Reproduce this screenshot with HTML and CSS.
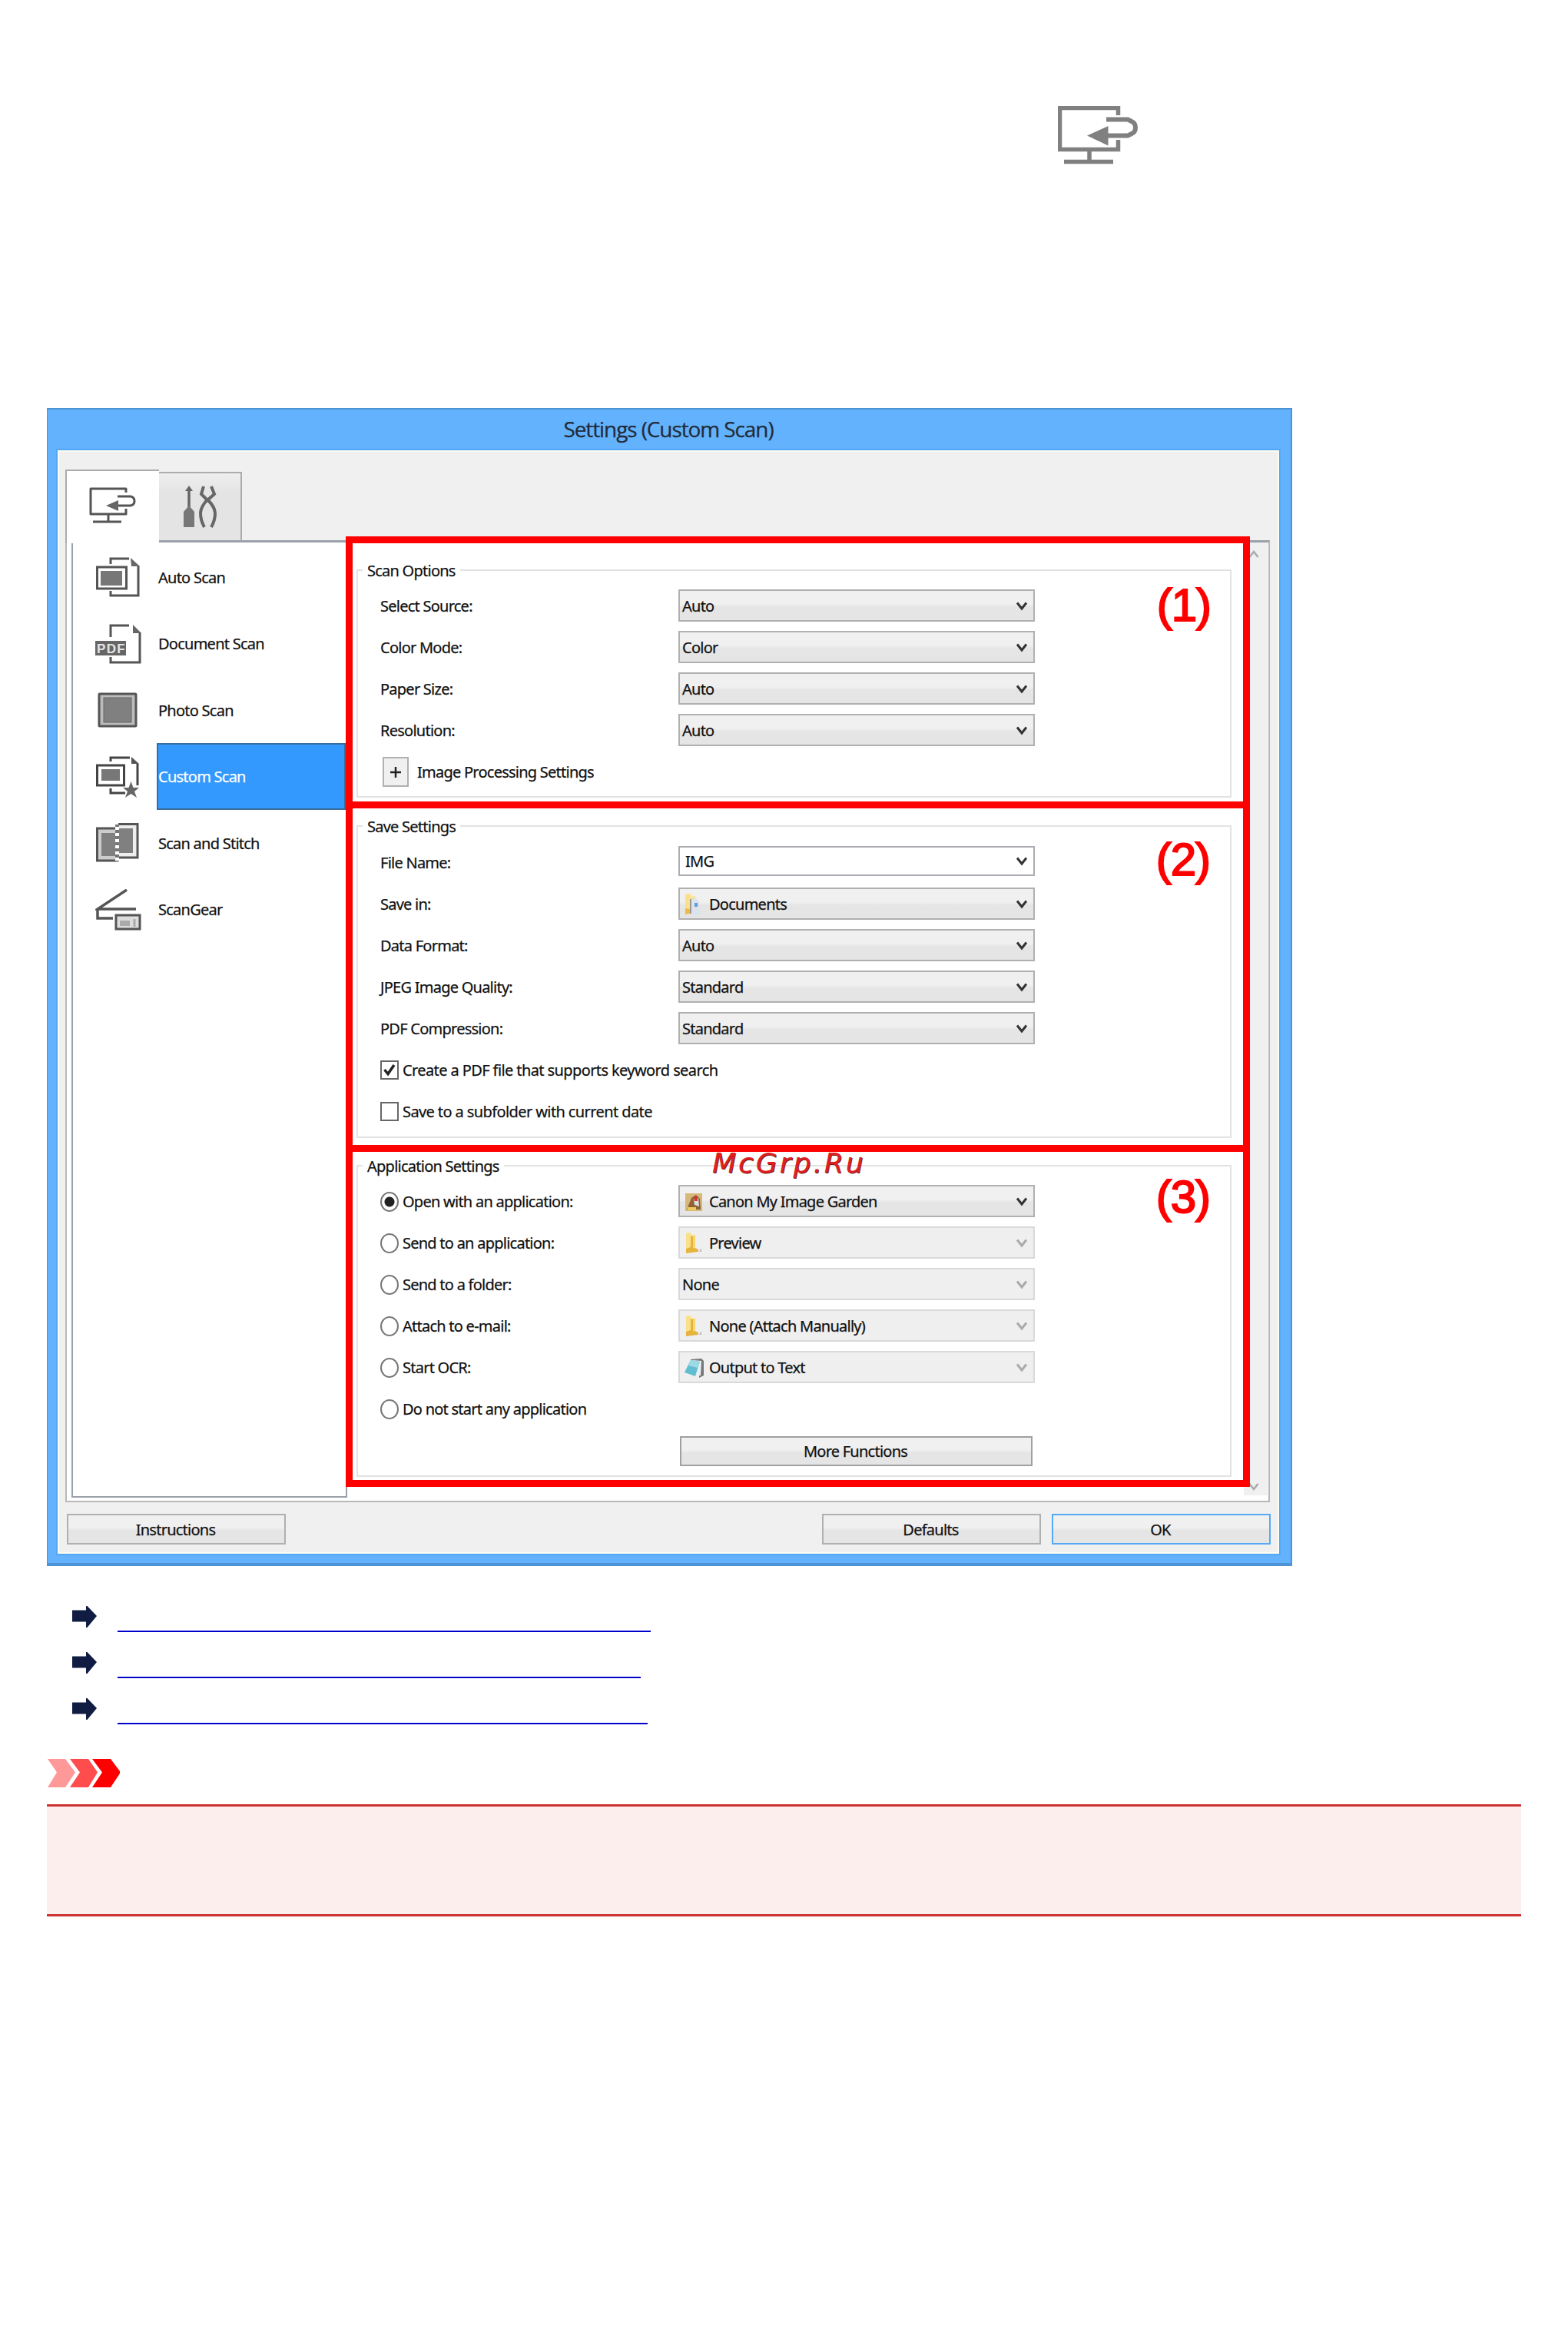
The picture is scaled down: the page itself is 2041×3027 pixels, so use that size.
FILE: index.html
```html
<!DOCTYPE html>
<html lang="en">
<head>
<meta charset="utf-8">
<title>Settings (Custom Scan)</title>
<link rel="stylesheet" href="styles.css">
</head>
<body>
<svg class="defs" width="0" height="0" aria-hidden="true">
  <symbol id="scan-to-pc" viewBox="0 0 104 76">
    <path d="M78.500 12V2.500H2.500V56.500H78.500V44M41 57V70M8 72.500H72" fill="none" stroke="#808080" stroke-width="5.500"/>
    <path d="M63 17.500H91L96 20Q101 22 101 28Q101 34 96 36L91 38.500H60" fill="none" stroke="#808080" stroke-width="6"/>
    <path d="M38 38.500L65.500 26V51.500Z" fill="#808080"/>
  </symbol>
  <symbol id="chevron" viewBox="0 0 16 12"><path d="M2 1.500L8 9L14 1.500" fill="none" stroke="currentColor" stroke-width="3"/></symbol>
  <symbol id="arrow" viewBox="0 0 32 28"><path d="M0 5.500H18V0H19.500L32 13L19.500 28H18V20.500H0Z" fill="#101c42"/></symbol>
  <symbol id="folder" viewBox="0 0 24 30">
    <path d="M2 2L8 1L9 5L14 4V22L10 24L2 27Z" fill="#fbe08a"/><path d="M8 5L11 6V20L18 23V26L2 28V22L8 20Z" fill="#e5b43c"/><path d="M11 6L14 4V20L11 22Z" fill="#f8d768"/><path d="M19 26L22 21V26Z" fill="#b7bcc2"/>
  </symbol>
</svg>

<main class="page">
  <header class="page-head"><svg class="head-icon"><use href="#scan-to-pc"/></svg></header>

  <section class="window">
    <h1 class="titlebar"><span>Settings (Custom Scan)</span></h1>
    <div class="client">
      <nav class="tabs">
        <div class="tab tab-active">
          <svg width="62" height="48" viewBox="0 0 62 48" fill="none" stroke="#555" stroke-width="3">
            <path d="M49 7V2H3V35H49V28M26 35V44M6 45H43" stroke-linejoin="round"/><path d="M38 12H55Q60 13 60 18Q60 23 55 24H38"/><path d="M23 24L39 17V31Z" fill="#666" stroke="none"/>
          </svg>
        </div>
        <div class="tab">
          <svg width="44" height="55" viewBox="0 0 44 55" fill="none" stroke="#666" stroke-width="4">
            <path d="M8 4V32" stroke-width="3.500"/><path d="M3 7L8 0L13 7Z" fill="#666" stroke="none"/><path d="M1 34L8 26L15 34V54H1Z" fill="#777" stroke="none"/>
            <path d="M27 1L24 11L32 19L41 11L37 1M32 18Q23 28 23 36Q23 45 28 54M32 18Q42 28 42 36Q42 45 37 54"/>
          </svg>
        </div>
      </nav>

      <div class="panel">
        <ul class="modes">
          <li class="mode">
            <svg width="60" height="54" viewBox="0 0 60 54" fill="none" stroke="#555" stroke-width="3"><path d="M20 10V3H44M20 45V51H56V12"/><path d="M46 2L58 13H47Z" fill="#666" stroke="none"/><rect x="2.500" y="14" width="38" height="28"/><rect x="7" y="19" width="28" height="19" fill="#777" stroke="none"/></svg>
            <span class="mode-name">Auto Scan</span></li>
          <li class="mode">
            <svg width="60" height="54" viewBox="0 0 60 54" fill="none" stroke="#555" stroke-width="3"><path d="M20 18V3H44M20 44V51H58V12"/><path d="M49 2L60 13H49Z" fill="#666" stroke="none"/><rect x="0" y="23" width="40" height="19" fill="#666" stroke="none"/><text x="2" y="39" class="pdf-tag" textLength="36">PDF</text></svg>
            <span class="mode-name">Document Scan</span></li>
          <li class="mode">
            <svg width="60" height="54" viewBox="0 0 60 54"><rect x="5" y="6" width="48" height="42" rx="1" fill="#bbb" stroke="#555" stroke-width="3"/><rect x="11" y="11" width="36" height="32" fill="#808080" stroke="#666"/></svg>
            <span class="mode-name">Photo Scan</span></li>
          <li class="mode mode-selected">
            <svg width="60" height="54" viewBox="0 0 60 54" fill="none" stroke="#444" stroke-width="3"><path d="M20 7V2H45M55 10V38M20 42V48H39"/><path d="M47 1L57 10H47Z" fill="#555" stroke="none"/><rect x="2.500" y="12" width="35" height="26"/><rect x="8" y="17" width="24" height="15" fill="#777" stroke="none"/><path d="M46.500 33L49.500 41H57L51 46L54 54L46.500 49L39 54L42 46L36 41H43.500Z" fill="#666" stroke="none"/></svg>
            <span class="mode-name">Custom Scan</span></li>
          <li class="mode">
            <svg width="60" height="54" viewBox="0 0 60 54"><path d="M27 8H2.500V50H30" fill="#ccc" stroke="#555" stroke-width="3"/><path d="M8 14H26V44H8Z" fill="#808080"/><path d="M30 2.500H55V46H30" fill="#eee" stroke="#555" stroke-width="3"/><path d="M31 8H49V40H31Z" fill="#808080"/><path d="M28.500 3V51" stroke="#777" stroke-width="5"/><path d="M28.500 6V51" stroke="#fff" stroke-width="5" stroke-dasharray="4 4"/></svg>
            <span class="mode-name">Scan and Stitch</span></li>
          <li class="mode">
            <svg width="60" height="54" viewBox="0 0 60 54" fill="none" stroke="#555" stroke-width="3"><path d="M41 1L3 26H53M3 26V38H23" stroke-width="3.500"/><rect x="27" y="34" width="31" height="18" fill="#ddd"/><path d="M32 41H45V48H32Z" fill="#aaa" stroke="none"/><path d="M51 39V49" stroke="#aaa"/></svg>
            <span class="mode-name">ScanGear</span></li>
        </ul>

        <div class="sections">
          <section class="frame frame-scan">
            <div class="group">
              <h2 class="legend">Scan Options</h2>
              <span class="callout">(1)</span>
              <div class="row"><span class="label">Select Source:</span><div class="select">Auto<svg class="chev"><use href="#chevron"/></svg></div></div>
              <div class="row"><span class="label">Color Mode:</span><div class="select">Color<svg class="chev"><use href="#chevron"/></svg></div></div>
              <div class="row"><span class="label">Paper Size:</span><div class="select">Auto<svg class="chev"><use href="#chevron"/></svg></div></div>
              <div class="row"><span class="label">Resolution:</span><div class="select">Auto<svg class="chev"><use href="#chevron"/></svg></div></div>
              <div class="row"><button class="expand"><svg width="14" height="14" viewBox="0 0 14 14"><path d="M7 0V14M0 7H14" stroke="#222" stroke-width="2.500"/></svg></button><span class="text">Image Processing Settings</span></div>
            </div>
          </section>

          <section class="frame frame-save">
            <div class="group">
              <h2 class="legend">Save Settings</h2>
              <span class="callout">(2)</span>
              <div class="row"><span class="label">File Name:</span><div class="select editable">IMG<svg class="chev"><use href="#chevron"/></svg></div></div>
              <div class="row"><span class="label">Save in:</span><div class="select"><span class="ico"><svg width="24" height="30" viewBox="0 0 24 30"><path d="M1 2L8 1L9 5L14 4V22L8 26L1 27Z" fill="#fbe08a"/><path d="M1 20L7 21V27L1 28Z" fill="#eebb44"/><path d="M9 8L14 6L19 12L21 27L13 30L9 26Z" fill="#dde3ea"/><path d="M8 8V27" stroke="#999" stroke-width="2"/><rect x="13" y="13" width="4" height="5" fill="#5aa0d8"/></svg></span>Documents<svg class="chev"><use href="#chevron"/></svg></div></div>
              <div class="row"><span class="label">Data Format:</span><div class="select">Auto<svg class="chev"><use href="#chevron"/></svg></div></div>
              <div class="row"><span class="label">JPEG Image Quality:</span><div class="select">Standard<svg class="chev"><use href="#chevron"/></svg></div></div>
              <div class="row"><span class="label">PDF Compression:</span><div class="select">Standard<svg class="chev"><use href="#chevron"/></svg></div></div>
              <div class="row"><span class="check"><svg width="16" height="16" viewBox="0 0 16 16"><path d="M1.500 7L6 12.500L14 1" fill="none" stroke="#222" stroke-width="3.500"/></svg></span><span class="text wide">Create a PDF file that supports keyword search</span></div>
              <div class="row"><span class="check"></span><span class="text wide">Save to a subfolder with current date</span></div>
            </div>
          </section>

          <section class="frame frame-app">
            <div class="group">
              <h2 class="legend">Application Settings</h2>
              <span class="callout">(3)</span>
              <div class="row"><span class="label"><i class="radio on"></i><span>Open with an application:</span></span><div class="select"><span class="ico"><svg width="24" height="28" viewBox="0 0 24 28"><rect x="1" y="3" width="22" height="23" fill="#d8b878"/><path d="M3 24L9 9L15 5L20 10L21 24Z" fill="#8f6238"/><path d="M4 21H15V25H4Z" fill="#f0c860"/><path d="M12 11L18 9L19 20L13 18Z" fill="#ddd"/><rect x="13" y="7" width="4" height="6" fill="#d8342c"/></svg></span>Canon My Image Garden<svg class="chev"><use href="#chevron"/></svg></div></div>
              <div class="row"><span class="label"><i class="radio"></i><span>Send to an application:</span></span><div class="select disabled"><span class="ico"><svg width="24" height="30"><use href="#folder"/></svg></span>Preview<svg class="chev"><use href="#chevron"/></svg></div></div>
              <div class="row"><span class="label"><i class="radio"></i><span>Send to a folder:</span></span><div class="select disabled">None<svg class="chev"><use href="#chevron"/></svg></div></div>
              <div class="row"><span class="label"><i class="radio"></i><span>Attach to e-mail:</span></span><div class="select disabled"><span class="ico"><svg width="24" height="30"><use href="#folder"/></svg></span>None (Attach Manually)<svg class="chev"><use href="#chevron"/></svg></div></div>
              <div class="row"><span class="label"><i class="radio"></i><span>Start OCR:</span></span><div class="select disabled"><span class="ico"><svg width="26" height="28" viewBox="0 0 26 28"><path d="M8 3L22 2L25 5V24L19 27V20Z" fill="#777"/><path d="M9 4L22 5L21 24L15 25Z" fill="#e9f0f2"/><path d="M8 4L20 6L14 25L0 20Z" fill="#62bdd0"/><path d="M8 4L20 6L17 14L5 11Z" fill="#9cdbe6"/></svg></span>Output to Text<svg class="chev"><use href="#chevron"/></svg></div></div>
              <div class="row"><span class="label"><i class="radio"></i><span>Do not start any application</span></span></div>
              <button class="btn more"><span>More Functions</span></button>
            </div>
          </section>
        </div>

        <div class="scrollbar">
          <svg width="14" height="10" viewBox="0 0 14 10"><path d="M1.500 9L7 2L12.500 9" fill="none" stroke="#aaa" stroke-width="2.500"/></svg>
          <svg width="14" height="10" viewBox="0 0 14 10"><path d="M1.500 1L7 8L12.500 1" fill="none" stroke="#aaa" stroke-width="2.500"/></svg>
        </div>
      </div>

      <footer class="buttons">
        <button class="btn"><span>Instructions</span></button>
        <button class="btn push"><span>Defaults</span></button>
        <button class="btn primary"><span>OK</span></button>
      </footer>
    </div>
    <span class="watermark">McGrp.Ru</span>
  </section>

  <ul class="links">
    <li><svg><use href="#arrow"/></svg><a class="link link-a"></a></li>
    <li><svg><use href="#arrow"/></svg><a class="link link-b"></a></li>
    <li><svg><use href="#arrow"/></svg><a class="link link-c"></a></li>
  </ul>

  <svg class="note-mark" width="97" height="37" viewBox="0 0 97 37"><path d="M1 0H24L37 17.500L24 37H1L13 17.500Z" fill="#f99"/><path d="M30 0H54L66 17.500L54 37H30L43 17.500Z" fill="#ff4d4d"/><path d="M59 0H83L95 16V19L83 37H59L72 17.500Z" fill="red"/></svg>
  <div class="note"></div>
</main>
</body>
</html>
```
FILE: styles.css
```css
* { box-sizing: border-box; }
body { margin: 0; background: #fff; font-family: "Noto Sans", sans-serif; color: #111; }
ul { list-style: none; margin: 0; padding: 0; }
.defs { display: block; height: 0; }
.page { width: 2041px; height: 3027px; padding: 138px 61px 0; overflow: hidden; }
.page-head { height: 393px; padding-left: 1316px; }
.head-icon { display: block; width: 104px; height: 76px; }

.window { position: relative; width: 1621px; height: 1507px; padding: 0 15px 15px 13px; background: #63b2fd; border: 1px solid #4d94d6; border-width: 2px 2px 4px 1px; font-size: 20px; letter-spacing: -0.75px; line-height: 28px; -webkit-text-stroke: 0.25px; }
.titlebar { height: 53px; margin: 0; display: flex; align-items: center; justify-content: center; font: 400 28px/52px "Open Sans", sans-serif; letter-spacing: -1.1px; color: #222b38; padding-bottom: 4px; }
.client { height: 1436px; padding: 25px 12px 0 10px; background: #f0f0f0; box-shadow: inset 0 0 0 2px #fbfbf3, 0 0 0 2px #52a8f6; }
.tabs { display: flex; align-items: flex-end; height: 92px; position: relative; z-index: 1; }
.tab { width: 108px; height: 89px; display: flex; align-items: center; justify-content: center; background: linear-gradient(#eee, #e4e4e4 30%); border: 2px solid #acacac; border-left: 0; border-bottom: 0; }
.tab-active { width: 122px; height: 96px; margin-bottom: -4px; background: #fff; border: 2px solid #acacac; border-width: 2px 0 0 2px; }
.tab-active svg { margin: 0 2px 4px 0; }
.panel { display: flex; width: 1568px; height: 1252px; padding-left: 6px; background: #fff; border: 2px solid #b8b8b8; border-top: 3px solid #9aa1a8; }
.modes { width: 359px; height: 1245px; padding-top: 4px; margin-top: -2px; border: 2px solid #9aa0a8; border-top: 0; }
.mode { display: flex; align-items: center; height: 86.500px; padding-left: 29px; gap: 20px; }
.mode-name { flex: 1; height: 87px; display: flex; align-items: center; padding: 1px 0 0 2px; }
.mode-selected .mode-name { background: #3399ff; color: #fff; border: 2px solid #3a6c9c; padding: 1px 0 0; }
.pdf-tag { font: 700 17px "Liberation Sans", sans-serif; fill: #e4e4e4; stroke: none; }

.sections { width: 1177px; margin: -8px 0 0 -2px; position: relative; z-index: 2; flex: none; }
.frame { border: 9px solid red; background: #fff; }
.frame-scan { height: 354px; padding: 34px 15px 0 5px; }
.frame-save { height: 456px; padding: 22px 15px 0 5px; margin-top: -9px; }
.frame-app { height: 445px; padding: 17px 15px 0 5px; margin-top: -9px; }
.group { position: relative; height: 297px; padding: 24px 0 0 29px; border: 2px solid #e2e2e2; display: flex; flex-direction: column; gap: 13px; }
.frame-save .group { height: 407px; padding-top: 25px; }
.frame-app .group { height: 406px; }
.legend { position: absolute; left: 6px; top: -14px; margin: 0; padding: 0 6px; background: #fff; font-size: 20px; font-weight: 400; line-height: 28px; }
.callout { position: absolute; right: 25px; top: 10px; font: 400 60px/70px "Liberation Sans", sans-serif; letter-spacing: -1px; color: red; -webkit-text-stroke: 2px red; }
.frame-save .callout { top: 8px; right: 26px; }
.frame-app .callout { top: 5px; right: 26px; }
.row { display: flex; align-items: center; height: 41px; flex: none; }
.label { width: 388px; display: flex; align-items: center; padding-top: 2px; }
.text { padding-top: 3px; }
.wide { letter-spacing: -0.6px; }
.select { width: 464px; height: 42px; flex: none; display: flex; align-items: center; padding: 2px 7px 0 3px; border: 2px solid #b0b0b0; background: linear-gradient(#f0f0f0 0 45%, #e5e5e5 55%); }
.select.editable { height: 39px; padding: 0 7px 0 7px; background: #fff; border-color: #abadb3; margin-bottom: 2px; }
.select.disabled { background: #efefef; border-color: #d9d9d9; }
.chev { width: 16px; height: 12px; margin-left: auto; color: #333; }
.disabled .chev { color: #aaa; }
.ico { width: 35px; height: 30px; padding-left: 3px; flex: none; display: flex; align-items: center; }
.expand { width: 34px; height: 39px; margin: 2px 11px 0 3px; padding: 0; border: 2px solid #b0b0b0; background: #f0f0f0; display: flex; align-items: center; justify-content: center; }
.check { width: 24px; height: 25px; margin: 2px 5px 0 0; border: 2px solid #666; display: flex; align-items: center; justify-content: center; }
.radio { width: 24px; height: 26px; margin-right: 5px; border: 2px solid #777; border-radius: 50%; display: block; }
.radio.on { background: radial-gradient(circle, #222 0 6px, #fff 7px); }
.btn { width: 285px; height: 40px; padding: 1px 2px 0 0; border: 2px solid #b0b0b0; background: linear-gradient(#f0f0f0 0 45%, #e5e5e5 55%); font: inherit; letter-spacing: inherit; color: inherit; }
.more { width: 459px; height: 39px; margin: 3px 0 0 390px; border-color: #a0a0a0; flex: none; }
.scrollbar { width: 31px; height: 1240px; margin-left: -8px; padding: 10px 5px 6px 0; background: #f0f0f0; display: flex; flex-direction: column; align-items: center; justify-content: space-between; }
.buttons { display: flex; gap: 14px; padding: 15px 0 0 2px; }
.push { margin-left: auto; }
.primary { border-color: #55aaf5; margin-right: -1px; }
.watermark { position: absolute; z-index: 3; left: 865px; top: 960px; font: italic 36px/42px "DejaVu Sans", sans-serif; letter-spacing: 3px; color: #e02020; text-shadow: 1px 1px 0 #7a1818; -webkit-text-stroke: 0; }

.links { margin-top: 52px; padding-left: 33px; }
.links li { display: flex; height: 60px; gap: 27px; }
.links svg { width: 32px; height: 28px; }
.link { height: 34px; border-bottom: 2px solid #0000cc; }
.link-a { width: 694px; }
.link-b { width: 681px; }
.link-c { width: 690px; }
.note-mark { display: block; margin-top: 19px; }
.note { margin-top: 22px; height: 146px; background: #fdeeee; border: solid #cc3333; border-width: 3px 0; }
```
